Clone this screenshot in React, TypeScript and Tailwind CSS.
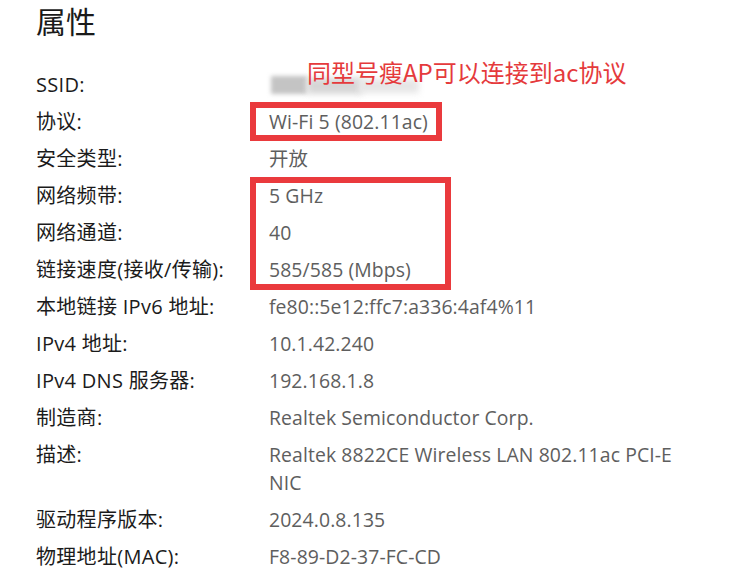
import React from "react";

const rows: { label: string; value: React.ReactNode }[] = [
  { label: "SSID:", value: null },
  { label: "协议:", value: "Wi-Fi 5 (802.11ac)" },
  { label: "安全类型:", value: "开放" },
  { label: "网络频带:", value: "5 GHz" },
  { label: "网络通道:", value: "40" },
  { label: "链接速度(接收/传输):", value: "585/585 (Mbps)" },
  { label: "本地链接 IPv6 地址:", value: "fe80::5e12:ffc7:a336:4af4%11" },
  { label: "IPv4 地址:", value: "10.1.42.240" },
  { label: "IPv4 DNS 服务器:", value: "192.168.1.8" },
  { label: "制造商:", value: "Realtek Semiconductor Corp." },
  {
    label: "描述:",
    value: (
      <>
        Realtek 8822CE Wireless LAN 802.11ac PCI-E
        <br />
        NIC
      </>
    ),
  },
  { label: "驱动程序版本:", value: "2024.0.8.135" },
  { label: "物理地址(MAC):", value: "F8-89-D2-37-FC-CD" },
];

export default function App() {
  return (
    <div
      className="relative w-[753px] h-[578px] overflow-hidden bg-white pl-[36px]"
      style={{ fontFamily: '"Open Sans", "Noto Sans CJK SC", sans-serif' }}
    >
      <h1 className="text-[30px] leading-[44px] text-[#1a1a1a] font-normal">属性</h1>
      <div className="mt-[27px] grid grid-cols-[233px_1fr] gap-y-[9px] leading-[28px]">
        {rows.map((r, i) => (
          <React.Fragment key={i}>
            <div className="text-[#1b1b1b] text-[20px] tracking-[0.3px]">{r.label}</div>
            <div className="text-[#5e5e5e] text-[19.4px] tracking-[0.1px]">
              {r.value === null ? (
                <div className="relative h-[28px] w-[160px]">
                  <div className="absolute left-[2px] top-[5px] h-[18px] w-[36px] bg-[#c4c4c4] blur-[2px]" />
                  <div className="absolute left-[38px] top-[7px] h-[16px] w-[55px] bg-[#d6d6d6] blur-[3px]" />
                  <div className="absolute left-[90px] top-[8px] h-[14px] w-[60px] bg-[#e6e6e6] blur-[3px]" />
                </div>
              ) : (
                r.value
              )}
            </div>
          </React.Fragment>
        ))}
      </div>

      <div
        className="absolute left-[307px] top-[57px] text-[24px] leading-[30px] text-[#e53a3c] whitespace-nowrap"
        style={{ fontFamily: '"Noto Sans CJK SC", "Noto Sans", sans-serif' }}
      >
        同型号瘦AP可以连接到ac协议
      </div>
      <div className="absolute left-[250px] top-[102px] w-[192px] h-[39px] border-[6px] border-[#ea3a3d]" />
      <div className="absolute left-[250px] top-[177px] w-[201px] h-[113px] border-[6px] border-[#ea3a3d]" />
    </div>
  );
}
